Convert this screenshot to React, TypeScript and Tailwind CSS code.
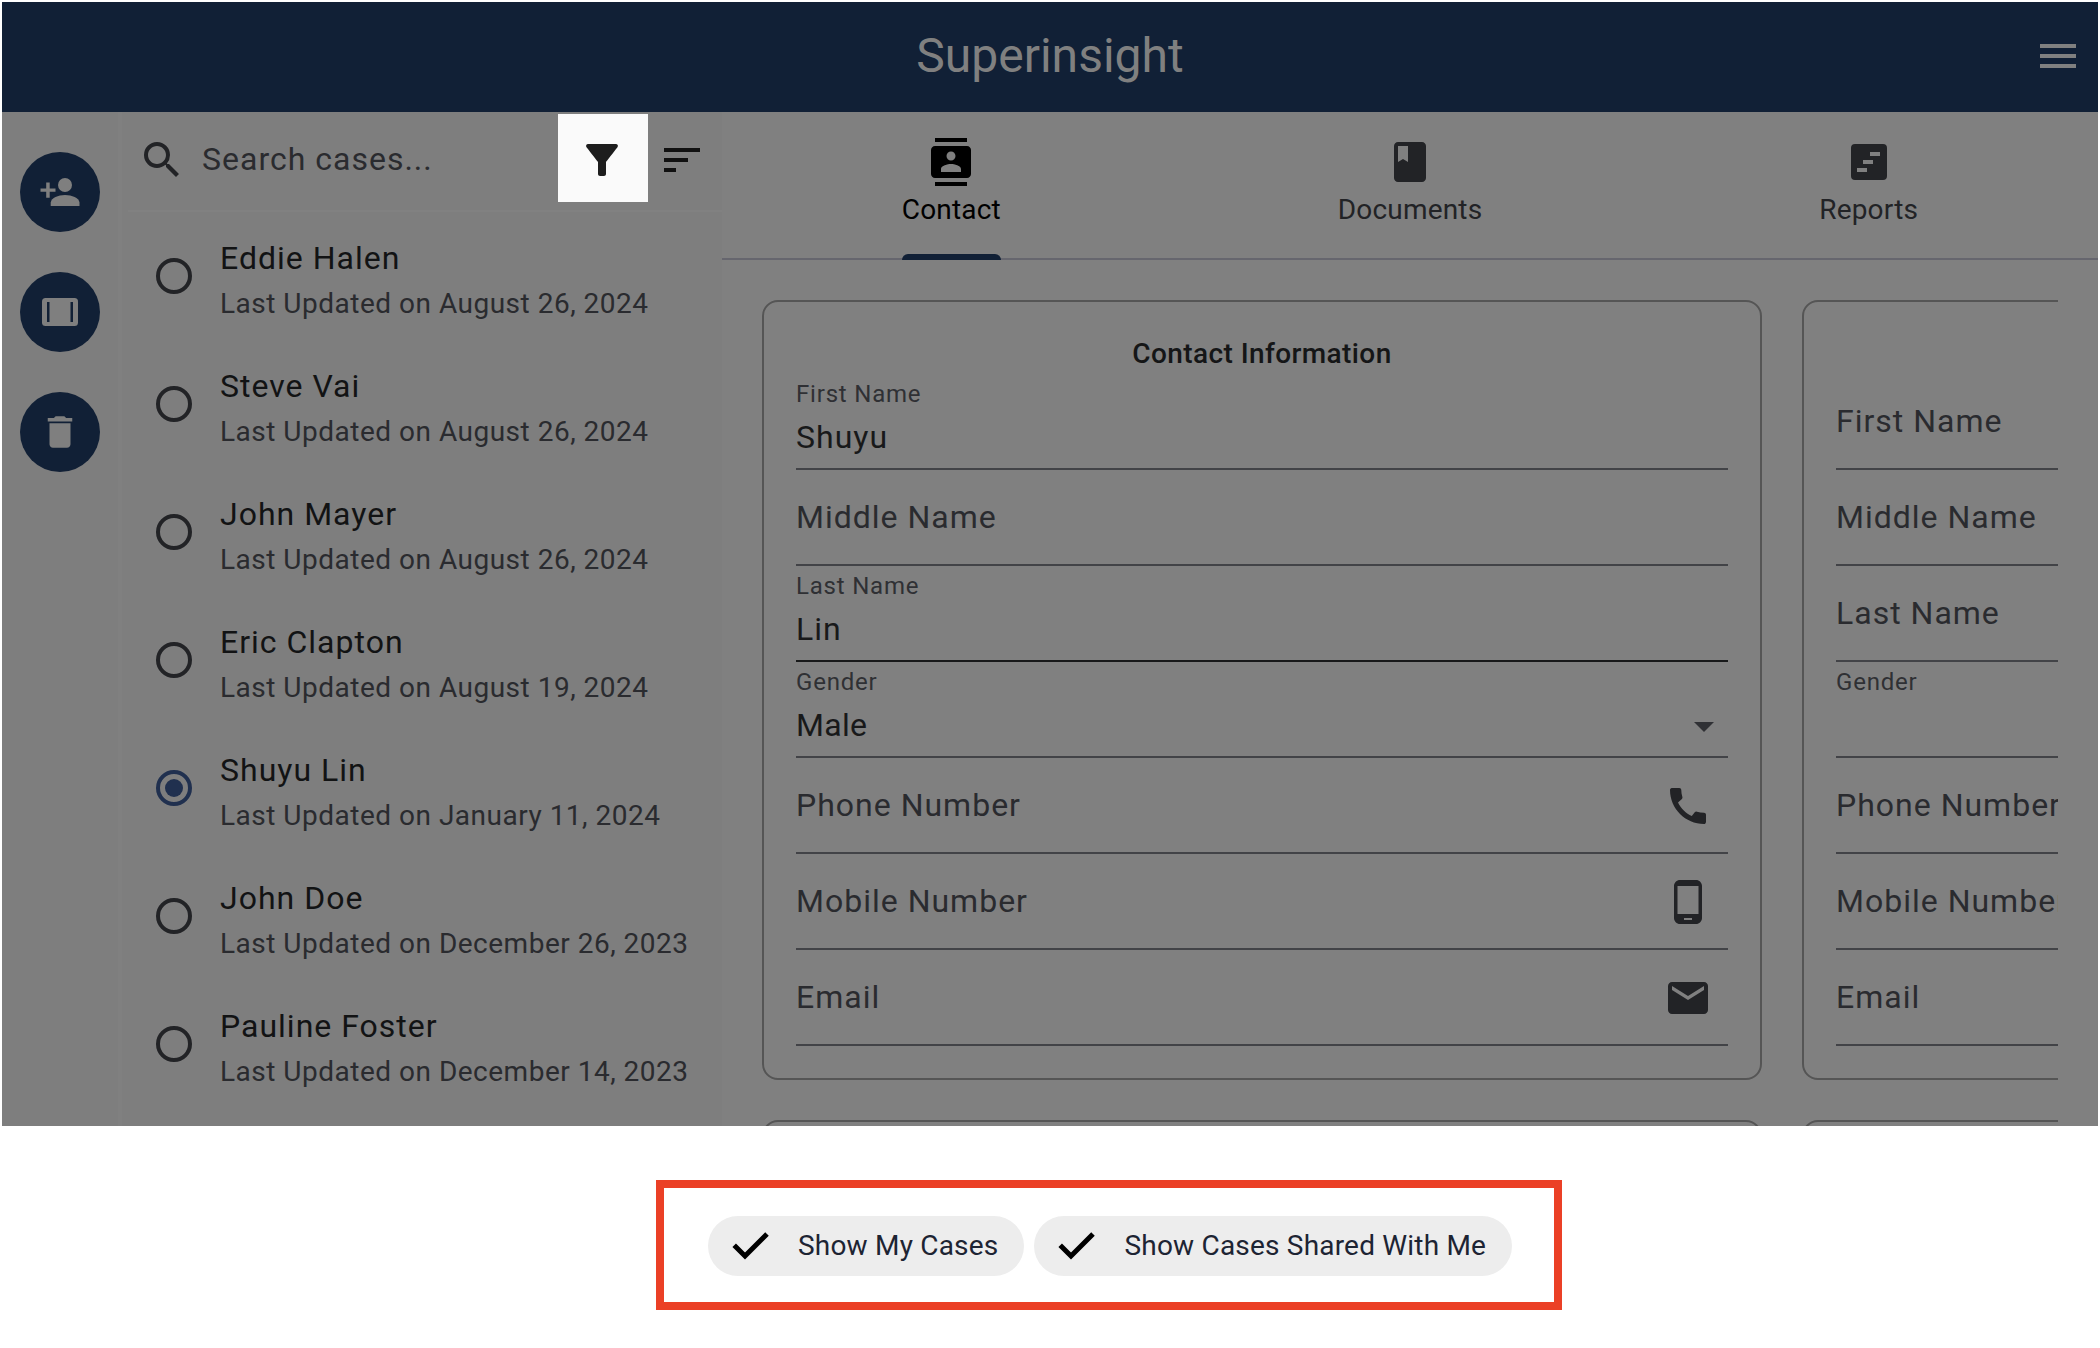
import React from "react";
import {
  MdSearch, MdFilterAlt, MdSort, MdMenu, MdDelete, MdContacts, MdBook,
  MdCall, MdPhoneAndroid, MdEmail, MdArrowDropDown,
} from "react-icons/md";

type Case = { name: string; updated: string; selected?: boolean };

const cases: Case[] = [
  { name: "Eddie Halen", updated: "August 26, 2024" },
  { name: "Steve Vai", updated: "August 26, 2024" },
  { name: "John Mayer", updated: "August 26, 2024" },
  { name: "Eric Clapton", updated: "August 19, 2024" },
  { name: "Shuyu Lin", updated: "January 11, 2024", selected: true },
  { name: "John Doe", updated: "December 26, 2023" },
  { name: "Pauline Foster", updated: "December 14, 2023" },
];

function PersonAddIcon() {
  return (
    <svg viewBox="0 0 40 28" className="h-7 w-10" fill="currentColor">
      <circle cx="25" cy="7" r="7" />
      <path d="M6.200 4.500h3.500V10.500H15.500v3.300H9.700v6H6.200v-6H0.500v-3.300H6.200z" />
      <path d="M10.700 28v-3.500C11.500 19.800 18 17 25 17s13.800 2.800 14.500 7.500V28z" />
    </svg>
  );
}

function ArchiveIcon() {
  return (
    <svg viewBox="0 0 36 36" className="size-9">
      <rect x="0" y="4" width="36" height="28" rx="3.500" fill="#7f7f7f" />
      <path d="M5 8h2.500v20H5zM28.500 8h2.500v20h-2.500z" fill="#112036" />
    </svg>
  );
}

function ReportsIcon() {
  return (
    <svg viewBox="0 0 24 24" className="size-12" fill="currentColor">
      <path
        fillRule="evenodd"
        d="M5 3h14a2 2 0 0 1 2 2v14a2 2 0 0 1-2 2H5a2 2 0 0 1-2-2V5a2 2 0 0 1 2-2zM6 15v2h5v-2zM9 11v2h5v-2zM12.500 7v2h5V7z"
      />
    </svg>
  );
}

function CheckIcon() {
  return (
    <svg viewBox="0 0 48 48" className="size-12" fill="none" stroke="#000" strokeWidth="5">
      <path d="M8.200 23.200L19 34L41 12" />
    </svg>
  );
}

function RailButton({ children }: { children: React.ReactNode }) {
  return (
    <button className="flex size-20 items-center justify-center rounded-full bg-[#112036] text-[#7f7f7f]">
      {children}
    </button>
  );
}

function CaseRow({ item }: { item: Case }) {
  return (
    <li className="flex h-32 pl-7">
      <span
        className={
          "mt-[38px] flex size-9 shrink-0 items-center justify-center rounded-full border-4 " +
          (item.selected ? "border-[#20304f]" : "border-[#222326]")
        }
      >
        {item.selected && <span className="size-[18px] rounded-full bg-[#20304f]" />}
      </span>
      <div className="ml-7 pt-[14px] whitespace-nowrap">
        <div className="text-[32px] leading-[48px] tracking-[1px] text-[#121314]">{item.name}</div>
        <div className="mt-[2px] text-[28px] leading-10 tracking-[0.5px] text-[#2a2b2f]">Last Updated on {item.updated}</div>
      </div>
    </li>
  );
}

function Tab({ icon, label, active }: { icon: React.ReactNode; label: string; active?: boolean }) {
  return (
    <div className={"flex flex-1 justify-center " + (active ? "text-black" : "text-[#222326]")}>
      <div className="flex h-[148px] flex-col items-center">
        <div className="mt-[26px]">{icon}</div>
        <div className="mt-[4px] text-[28px] leading-10 tracking-[0.2px]">{label}</div>
        {active && <div className="mt-auto h-[6px] w-full rounded-t-[6px] bg-[#112036]" />}
      </div>
    </div>
  );
}

function Field({ label, value, floating, dark, select, icon }: {
  label: string; value?: string; floating?: boolean; dark?: boolean; select?: boolean; icon?: React.ReactNode;
}) {
  return (
    <div
      className={
        "flex h-24 items-center justify-between border-b-2 whitespace-nowrap " +
        (dark ? "border-[#18191a]" : "border-[#424347]")
      }
    >
      {floating ? (
        <div className="h-full pt-1">
          <div className="text-[24px] leading-8 tracking-[0.8px] text-[#2f3034]">{label}</div>
          <div className={"mt-[5px] text-[32px] leading-[44px] text-[#18191a] " + (select ? "tracking-[0.3px]" : "tracking-[1px]")}>
            {value}
          </div>
        </div>
      ) : (
        <div className="text-[32px] leading-[48px] tracking-[1px] text-[#2a2b2f]">{label}</div>
      )}
      {icon}
    </div>
  );
}

function Card({ children }: { children?: React.ReactNode }) {
  return (
    <section className="h-[780px] w-[1000px] shrink-0 rounded-2xl border-2 border-[#555555] px-8 pt-[32px]">
      {children}
    </section>
  );
}

const trailing = "mt-[2px] mr-4 size-12 text-[#222326]";

function Chip({ label }: { label: string }) {
  return (
    <button className="flex h-[60px] items-center rounded-full bg-[#ededed] pr-[26px] pl-[18px] text-[28px] tracking-[0.2px] whitespace-nowrap text-[#1d2433]">
      <CheckIcon />
      <span className="ml-6">{label}</span>
    </button>
  );
}

export default function App() {
  return (
    <div className="h-[1348px] w-[2100px] overflow-hidden bg-white p-[2px] font-['Roboto',sans-serif]">
      <div className="flex h-[1124px] flex-col overflow-hidden bg-[#7e7e7e]">
        <header className="grid h-[110px] shrink-0 grid-cols-[1fr_auto_1fr] items-center bg-[#112036] pb-[2px] text-[#808080]">
          <span />
          <h1 className="text-[48px] leading-[56px]">Superinsight</h1>
          <MdMenu className="mr-4 size-12 justify-self-end" />
        </header>

        <div className="flex min-h-0 flex-1">
          <nav className="flex w-[116px] shrink-0 flex-col items-center gap-10 pt-10">
            <RailButton><PersonAddIcon /></RailButton>
            <RailButton><ArchiveIcon /></RailButton>
            <RailButton><MdDelete className="size-[42px]" /></RailButton>
          </nav>
          <div className="w-[4px] shrink-0 bg-[#808080]" />

          <aside className="w-[600px] shrink-0 pl-[6px]">
            <div className="flex h-[100px] items-start border-b-2 border-[#818181]">
              <MdSearch className="mt-6 ml-[10px] size-12 text-[#222326]" />
              <span className="mt-[23px] ml-4 flex-1 text-[32px] leading-[48px] tracking-[1px] text-[#2a2b2f]">Search cases...</span>
              <div className="mt-[2px] flex h-[88px] w-[90px] items-center justify-center bg-[#fafafa] pt-1 pr-[2px]">
                <MdFilterAlt className="size-12 text-[#1d1d1d]" />
              </div>
              <MdSort className="mt-6 mr-4 ml-[10px] size-12 text-[#111111]" />
            </div>
            <ul className="pt-[8px]">
              {cases.map((c) => <CaseRow key={c.name} item={c} />)}
            </ul>
          </aside>

          <main className="flex min-w-0 flex-1 flex-col bg-[#808080]">
            <div className="flex h-[148px] shrink-0 bg-[linear-gradient(#66666e,#66666e)] bg-[length:100%_2px] bg-bottom bg-no-repeat">
              <Tab icon={<MdContacts className="size-12" />} label="Contact" active />
              <Tab icon={<MdBook className="size-12" />} label="Documents" />
              <Tab icon={<ReportsIcon />} label="Reports" />
            </div>
            <div className="mx-10 flex min-h-0 flex-1 flex-col gap-10 overflow-hidden pt-10">
              <div className="flex shrink-0 gap-10">
                <Card>
                  <h2 className="text-center text-[28px] leading-10 font-medium tracking-[0.4px] text-[#151617]">Contact Information</h2>
                  <Field label="First Name" value="Shuyu" floating />
                  <Field label="Middle Name" />
                  <Field label="Last Name" value="Lin" floating dark />
                  <Field label="Gender" value="Male" floating select icon={<MdArrowDropDown className="mt-[34px] size-12 text-[#303135]" />} />
                  <Field label="Phone Number" icon={<MdCall className={trailing} />} />
                  <Field label="Mobile Number" icon={<MdPhoneAndroid className={trailing} />} />
                  <Field label="Email" icon={<MdEmail className={trailing} />} />
                </Card>
                <Card>
                  <div className="h-10" />
                  <Field label="First Name" />
                  <Field label="Middle Name" />
                  <Field label="Last Name" />
                  <Field label="Gender" floating />
                  <Field label="Phone Number" />
                  <Field label="Mobile Number" />
                  <Field label="Email" />
                </Card>
              </div>
              <div className="flex shrink-0 gap-10">
                <Card />
                <Card />
              </div>
            </div>
          </main>
        </div>
      </div>

      <div className="mt-[54px] ml-[654px] flex h-[130px] w-[906px] items-center gap-[10px] border-8 border-[#eb4026] pt-[2px] pl-11">
        <Chip label="Show My Cases" />
        <Chip label="Show Cases Shared With Me" />
      </div>
    </div>
  );
}
